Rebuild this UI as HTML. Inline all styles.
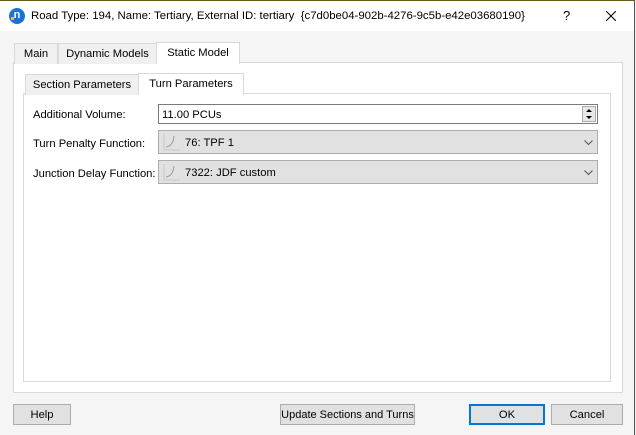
<!DOCTYPE html>
<html><head><style>
*{box-sizing:border-box;margin:0;padding:0}
body{width:636px;height:435px;overflow:hidden;font-family:"Liberation Sans",sans-serif;font-size:11.2px;color:#000;background:#f0f0f0;position:relative;white-space:nowrap}
.a{position:absolute}
.win{left:0;top:0;width:635px;height:435px;border-top:1px solid #6b5a1e;border-right:1px solid #555;background:#f5f5f5}
.title{left:0;top:1px;width:634px;height:30px;background:#fff}
.tab{position:absolute;height:21px;border:1px solid #d9d9d9;border-bottom:none;background:#f0f0f0;text-align:center;line-height:21px}
.sel{background:#fff;border-color:#d9d9d9}
.pane{background:#fff;border:1px solid #d9d9d9}
.lbl{position:absolute;left:33px}
.combo{position:absolute;left:158px;width:440px;height:24px;background:#e1e1e1;border:1px solid #adadad}
.combo span{position:absolute;left:26px;top:6px}
.btn{position:absolute;top:404px;height:21px;background:#e1e1e1;border:1px solid #adadad;text-align:center;line-height:20px}
</style></head><body>
<div class="a win"></div>
<div class="a title"></div>
<div class="a" style="left:9px;top:8px;width:16px;height:16px;border-radius:50%;background:#1a73d9;color:#fff;font-size:11px;font-weight:bold;line-height:15px;text-align:center">n</div>
<div class="a" style="left:11px;top:17px;width:3px;height:3px;background:#f0c020"></div>
<div class="a" style="left:31px;top:10px;font-size:11.4px">Road Type: 194, Name: Tertiary, External ID: tertiary &nbsp;{c7d0be04-902b-4276-9c5b-e42e03680190}</div>
<div class="a" style="left:563px;top:8px;font-size:13px">?</div>
<svg class="a" style="left:606px;top:11px" width="10" height="10"><path d="M0 0L10 10M10 0L0 10" stroke="#000" stroke-width="1"/></svg>

<div class="a pane" style="left:13px;top:62px;width:610px;height:331px"></div>
<div class="tab" style="left:14px;top:43px;width:44px">Main</div>
<div class="tab" style="left:58px;top:43px;width:99px">Dynamic Models</div>
<div class="tab sel" style="left:156px;top:42px;width:84px;height:22px">Static Model</div>

<div class="a pane" style="left:23px;top:93px;width:588px;height:289px"></div>
<div class="tab" style="left:25px;top:74px;width:114px">Section Parameters</div>
<div class="tab sel" style="left:138px;top:73px;width:106px;height:22px">Turn Parameters</div>

<div class="lbl" style="top:109px">Additional Volume:</div>
<div class="a" style="left:158px;top:104px;width:440px;height:20px;background:#fff;border:1px solid #7a7a7a"></div>
<div class="a" style="left:162px;top:109px">11.00 PCUs</div>
<div class="a" style="left:582px;top:106px;width:14px;height:16px;background:#e8e8e8;border:1px solid #adadad"></div>
<svg class="a" style="left:584px;top:108px" width="10" height="12"><path d="M2 4L5 1L8 4Z M2 8L8 8L5 11Z" fill="#000"/></svg>

<div class="lbl" style="top:138px">Turn Penalty Function:</div>
<div class="combo" style="top:130px"><svg class="a" style="left:4px;top:3px" width="18" height="17"><path d="M1 0V16H17" stroke="#c8c8c8" fill="none"/><path d="M3 13Q10 12 11 2" stroke="#999" fill="none"/></svg><span>76: TPF 1</span></div>
<svg class="a" style="left:584px;top:140px" width="9" height="6"><path d="M0.5 0.5L4.5 4.5L8.5 0.5" stroke="#555" fill="none"/></svg>

<div class="lbl" style="top:168px">Junction Delay Function:</div>
<div class="combo" style="top:160px"><svg class="a" style="left:4px;top:3px" width="18" height="17"><path d="M1 0V16H17" stroke="#c8c8c8" fill="none"/><path d="M3 13Q10 12 11 2" stroke="#999" fill="none"/></svg><span>7322: JDF custom</span></div>
<svg class="a" style="left:584px;top:170px" width="9" height="6"><path d="M0.5 0.5L4.5 4.5L8.5 0.5" stroke="#555" fill="none"/></svg>

<div class="btn" style="left:13px;width:58px">Help</div>
<div class="btn" style="left:280px;width:135px;font-size:11px">Update Sections and Turns</div>
<div class="btn" style="left:469px;width:76px;border:2px solid #0078d7;line-height:18px">OK</div>
<div class="btn" style="left:551px;width:72px">Cancel</div>
</body></html>
